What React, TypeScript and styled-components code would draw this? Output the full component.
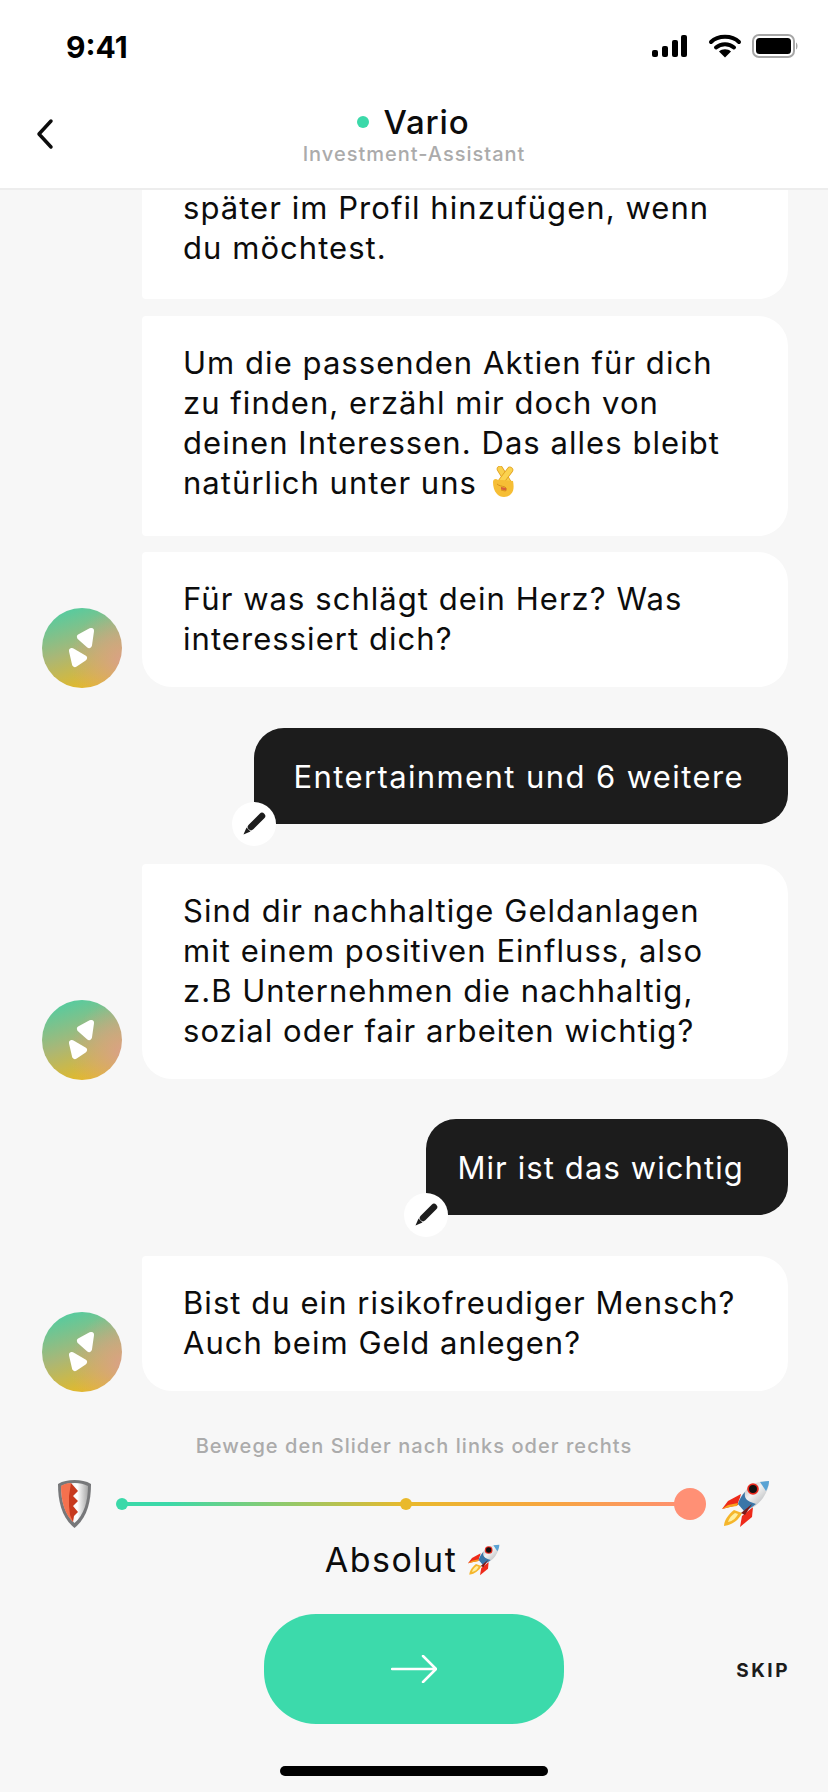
import React from 'react';
import styled, { createGlobalStyle } from 'styled-components';

const GlobalStyle = createGlobalStyle`
  html, body {
    margin: 0;
    padding: 0;
    background: #f7f7f7;
  }

  * {
    box-sizing: border-box;
  }
`;

const RocketIcon: React.FC<{ size: number }> = ({ size }) => (
  <svg width={size} height={size} viewBox="0 0 48 48">
    <defs>
      <linearGradient id="hull" x1="0" y1="0" x2="1" y2="1">
        <stop offset="0" stopColor="#8f9396" />
        <stop offset="0.45" stopColor="#f2f2f2" />
        <stop offset="1" stopColor="#9a9ea2" />
      </linearGradient>
    </defs>
    <path d="M0 29 L6 21 L19 14 L16 25 L8 27 Z" fill="#ee2a1a" />
    <path d="M0 29 L6 25 L16 23 L15 26 L8 27 Z" fill="#f7a21e" />
    <path d="M18 47 L20 36 L31 27 L30 37 Z" fill="#ee2a1a" />
    <path d="M2 46 C2 40 7 34 12 30 L20 33 C17 40 10 45 2 46 Z" fill="#f5b62c" />
    <path d="M6 42 C7 38 10 35 13 33 L16 34 C14 38 11 41 6 42 Z" fill="#fff0a0" />
    <path d="M47 1 C40 1 30 3 25 9 C20 15 16 20 16 24 L22 31 C28 30 36 25 41 18 C45 12 47 6 47 1 Z" fill="url(#hull)" />
    <path d="M16 24 C17 20 20 15 23 12 C22 18 24 21 34 24 C30 27 26 30 22 31 Z" fill="#3a76a8" />
    <path d="M38 2 C41 1.500 44 1 47 1 C47 4 46 8 44 11 C42 8 40 5 38 2 Z" fill="#5aa3d4" />
    <path d="M19 33 L30 24 L23 35 Z" fill="#7c1a18" />
    <circle cx="31" cy="9" r="5.800" fill="#e8281c" />
    <circle cx="31" cy="9" r="4" fill="#111" />
  </svg>
);

const ShieldIcon: React.FC = () => (
  <svg width="33" height="48" viewBox="0 0 33 48">
    <defs>
      <linearGradient id="plate" x1="0" y1="0" x2="1" y2="0">
        <stop offset="0" stopColor="#d8d8d8" />
        <stop offset="0.6" stopColor="#ffffff" />
        <stop offset="1" stopColor="#a8a8a8" />
      </linearGradient>
    </defs>
    <path d="M16.500 0 C23 0 28 1 33 4 C33 22 29 38 16.500 48 C4 38 0 22 0 4 C5 1 10 0 16.500 0 Z" fill="#77787a" />
    <path d="M16.500 3 C22 3 26 4 30 6 C30 21 26 35 16.500 43 C7 35 3 21 3 6 C7 4 11 3 16.500 3 Z" fill="url(#plate)" />
    <path d="M13 3 C9 3 6 4 3 6 C3 21 7 35 15 42 L14 36 L18 32 L13 26 L18 21 L13 16 L18 11 L13 5 Z" fill="#f4714e" />
    <path d="M13 3 L20 11 L15 16 L20 21 L15 26 L20 32 L16 36 L15 42 L12 35 L11 26 L11 16 Z" fill="#c73a1e" />
  </svg>
);

const FingersSvg = styled.svg`
  margin-left: 5px;
  vertical-align: -4px;
`;

const FingersIcon: React.FC = () => (
  <FingersSvg width="22" height="32" viewBox="0 0 22 32">
    <path d="M8 3 L16 16" stroke="#e0a020" strokeWidth="6.500" strokeLinecap="round" />
    <path d="M8 3 L16 16" stroke="#f9cf4b" strokeWidth="5" strokeLinecap="round" />
    <path d="M18 4 L8 17" stroke="#e0a020" strokeWidth="6.500" strokeLinecap="round" />
    <path d="M18 4 L8 17" stroke="#fbd34f" strokeWidth="5" strokeLinecap="round" />
    <path d="M1 16 C1 13 4 12 6 14 L10 14 L21 15 C22 20 22 25 19 28 C16 32 8 32 5 28 C2 25 1 20 1 16 Z" fill="#f6be35" />
    <path d="M5 18 C7 20 10 20 13 21 C15 22 15 25 13 25 L9 24" fill="none" stroke="#d8921c" strokeWidth="1" />
    <path d="M9 21 L14 22 L14 24.500 L9 23.500 Z" fill="#d8603a" />
  </FingersSvg>
);

const StatusIcons: React.FC = () => (
  <svg width="146" height="24" viewBox="0 0 146 24">
    <rect x="0" y="16" width="6" height="7" rx="2" fill="#000" />
    <rect x="10" y="12" width="6" height="11" rx="2" fill="#000" />
    <rect x="20" y="6" width="6" height="17" rx="2" fill="#000" />
    <rect x="29" y="1" width="6" height="22" rx="2" fill="#000" />
    <path d="M59 8 C66 1 80 1 87 8" stroke="#000" strokeWidth="4" fill="none" strokeLinecap="round" />
    <path d="M64 13.500 C69 9 77 9 82 13.500" stroke="#000" strokeWidth="4" fill="none" strokeLinecap="round" />
    <path d="M67 17.500 L73 23.500 L79 17.500 C76 14.500 70 14.500 67 17.500 Z" fill="#000" />
    <rect x="101" y="1" width="41" height="22" rx="6" fill="none" stroke="#a6a6a6" strokeWidth="2" />
    <rect x="104" y="4" width="35" height="16" rx="3.500" fill="#000" />
    <path d="M144 8.500 C146 9.500 146 14.500 144 15.500 Z" fill="#a6a6a6" />
  </svg>
);

const Screen = styled.div`
  width: 828px;
  height: 1792px;
  display: flex;
  flex-direction: column;
  overflow: hidden;
  background: #f7f7f7;
  color: #0c0c0c;
  font-family: 'Inter', 'Liberation Sans', sans-serif;
`;

const Header = styled.header`
  position: relative;
  z-index: 1;
  flex: none;
  height: 190px;
  background: #fff;
  border-bottom: 2px solid #ededed;
`;

const StatusBar = styled.div`
  height: 88px;
  padding: 31px 30px 0 66px;
  display: flex;
  justify-content: space-between;
  align-items: flex-start;
  font-size: 30px;
  line-height: 32px;
  font-weight: 700;
  color: #000;

  svg {
    margin-top: 3px;
  }
`;

const NavBar = styled.div`
  position: relative;
  display: flex;
  flex-direction: column;
  align-items: center;
`;

const BackButton = styled.div`
  position: absolute;
  left: 33px;
  top: 30px;
  line-height: 0;
`;

const TitleRow = styled.div`
  display: flex;
  align-items: center;
  gap: 15px;
  height: 38px;
  margin: 15px 0 0 -2px;
  font-size: 33px;
  font-weight: 500;
  letter-spacing: 0.8px;
`;

const OnlineDot = styled.span`
  width: 12px;
  height: 12px;
  border-radius: 50%;
  background: #3bd9a9;
`;

const Subtitle = styled.div`
  margin-top: 1px;
  font-size: 20px;
  line-height: 24px;
  font-weight: 500;
  letter-spacing: 1px;
  color: #ababab;
`;

const Chat = styled.main`
  flex: none;
  height: 1202px;
  padding: 0 40px 0 42px;
  display: flex;
  flex-direction: column;
  overflow: hidden;
`;

const BotRow = styled.div<{ $gap: number; $indent?: boolean }>`
  display: flex;
  align-items: flex-end;
  gap: 20px;
  margin-top: ${(p) => p.$gap}px;
  padding-left: ${(p) => (p.$indent ? 100 : 0)}px;
`;

const Avatar = styled.div`
  flex: none;
  width: 80px;
  height: 80px;
  margin-bottom: -1px;
  border-radius: 50%;
  background:
    radial-gradient(circle at 100% 65%, #d9a187 0%, rgba(217, 161, 135, 0) 55%),
    linear-gradient(162deg, #5cca9c 12%, #a9b777 50%, #e3b92a 88%);
  line-height: 0;
`;

const Bubble = styled.div`
  flex: 1;
  padding: 27px 30px 28px 41px;
  background: #fff;
  border-radius: 4px 30px 30px 30px;
  font-size: 31px;
  line-height: 40px;
  letter-spacing: 1.05px;
  white-space: nowrap;
`;

const MiddleBubble = styled(Bubble)`
  padding-bottom: 33px;
  border-bottom-left-radius: 4px;
`;

const ClippedBubble = styled(Bubble)`
  margin-top: -2px;
  padding-top: 0;
  padding-bottom: 31px;
  border-radius: 0 0 30px 4px;
`;

const UserRow = styled.div<{ $gap: number }>`
  display: flex;
  justify-content: flex-end;
  margin-top: ${(p) => p.$gap}px;
`;

const UserBubble = styled.div<{ $padLeft: number; $tracking: number }>`
  position: relative;
  height: 96px;
  padding-left: ${(p) => p.$padLeft}px;
  padding-right: 44px;
  display: flex;
  align-items: center;
  background: #1c1c1c;
  border-radius: 30px 30px 30px 4px;
  color: #fff;
  font-size: 31px;
  letter-spacing: ${(p) => p.$tracking}px;
  white-space: nowrap;
`;

const EditBadge = styled.div`
  position: absolute;
  left: -22px;
  bottom: -22px;
  width: 44px;
  height: 44px;
  display: flex;
  align-items: center;
  justify-content: center;
  border-radius: 50%;
  background: #fff;
`;

const Footer = styled.section`
  flex: 1;
  position: relative;
  display: flex;
  flex-direction: column;
  align-items: center;
`;

const Hint = styled.div`
  margin-top: 41px;
  font-size: 20px;
  line-height: 26px;
  font-weight: 500;
  letter-spacing: 1.05px;
  color: #ababab;
`;

const SliderRow = styled.div`
  margin-top: 21px;
  width: 100%;
  height: 48px;
  padding: 0 58px;
  display: flex;
  align-items: center;
  justify-content: space-between;
`;

const Track = styled.div`
  position: relative;
  width: 568px;
  height: 4px;
  margin-left: 25px;
  background: linear-gradient(90deg, #3bd9a9 0%, #3bd9a9 8%, #e9b92c 50%, #f7a63f 75%, #ff8f73 100%);
`;

const TrackDot = styled.span<{ $left: number; $color: string }>`
  position: absolute;
  top: -4px;
  left: ${(p) => p.$left}px;
  width: 12px;
  height: 12px;
  margin-left: -6px;
  border-radius: 50%;
  background: ${(p) => p.$color};
`;

const Thumb = styled.span`
  position: absolute;
  top: -14px;
  right: -16px;
  width: 32px;
  height: 32px;
  border-radius: 50%;
  background: #ff9075;
`;

const RocketSlot = styled.div`
  margin-left: 26px;
  line-height: 0;
`;

const Verdict = styled.div`
  margin: 10px 0 0 -3px;
  display: flex;
  align-items: center;
  gap: 11px;
  font-size: 34px;
  line-height: 44px;
  letter-spacing: 1.5px;
  color: #0c0c0c;
`;

const NextButton = styled.button`
  margin-top: 32px;
  width: 300px;
  height: 110px;
  border: 0;
  border-radius: 52px;
  background: #3cdaab;
  display: flex;
  align-items: center;
  justify-content: center;
`;

const Skip = styled.div`
  position: absolute;
  right: 38px;
  top: 267px;
  font-size: 19px;
  line-height: 24px;
  font-weight: 700;
  letter-spacing: 2.500px;
  color: #1c1c1c;
`;

const HomeIndicator = styled.div`
  margin-top: 42px;
  width: 268px;
  height: 10px;
  border-radius: 5px;
  background: #000;
`;

const VarioAvatar: React.FC = () => (
  <Avatar>
    <svg width="80" height="80" viewBox="0 0 80 80">
      <g fill="#fff" stroke="#fff" strokeWidth="6" strokeLinejoin="round">
        <path d="M49 23 L38 29 L47 37 Z" />
        <path d="M30 43 L42 50 L33 56 Z" />
      </g>
    </svg>
  </Avatar>
);

const Pencil: React.FC = () => (
  <EditBadge>
    <svg width="24" height="24" viewBox="0 0 24 24">
      <path d="M9 15 L20 4" stroke="#1c1c1c" strokeWidth="6.500" strokeLinecap="round" />
      <path d="M4.500 15.500 L8.500 19.500 L1.500 22.500 Z" fill="#1c1c1c" />
    </svg>
  </EditBadge>
);

const App: React.FC = () => (
  <Screen>
    <GlobalStyle />
    <Header>
      <StatusBar>
        <span>9:41</span>
        <StatusIcons />
      </StatusBar>
      <NavBar>
        <BackButton>
          <svg width="24" height="32" viewBox="0 0 24 32">
            <path d="M18 3 L6 16 L18 29" fill="none" stroke="#0c0c0c" strokeWidth="3.500" strokeLinecap="round" strokeLinejoin="round" />
          </svg>
        </BackButton>
        <TitleRow>
          <OnlineDot />
          Vario
        </TitleRow>
        <Subtitle>Investment-Assistant</Subtitle>
      </NavBar>
    </Header>
    <Chat>
      <BotRow $gap={0} $indent>
        <ClippedBubble>
          später im Profil hinzufügen, wenn
          <br />
          du möchtest.
        </ClippedBubble>
      </BotRow>
      <BotRow $gap={17} $indent>
        <MiddleBubble>
          Um die passenden Aktien für dich
          <br />
          zu finden, erzähl mir doch von
          <br />
          deinen Interessen. Das alles bleibt
          <br />
          natürlich unter uns <FingersIcon />
        </MiddleBubble>
      </BotRow>
      <BotRow $gap={16}>
        <VarioAvatar />
        <Bubble>
          Für was schlägt dein Herz? Was
          <br />
          interessiert dich?
        </Bubble>
      </BotRow>
      <UserRow $gap={41}>
        <UserBubble $padLeft={39} $tracking={1.4}>
          Entertainment und 6 weitere
          <Pencil />
        </UserBubble>
      </UserRow>
      <BotRow $gap={40}>
        <VarioAvatar />
        <Bubble>
          Sind dir nachhaltige Geldanlagen
          <br />
          mit einem positiven Einfluss, also
          <br />
          z.B Unternehmen die nachhaltig,
          <br />
          sozial oder fair arbeiten wichtig?
        </Bubble>
      </BotRow>
      <UserRow $gap={40}>
        <UserBubble $padLeft={31} $tracking={1.1}>
          Mir ist das wichtig
          <Pencil />
        </UserBubble>
      </UserRow>
      <BotRow $gap={41}>
        <VarioAvatar />
        <Bubble>
          Bist du ein risikofreudiger Mensch?
          <br />
          Auch beim Geld anlegen?
        </Bubble>
      </BotRow>
    </Chat>
    <Footer>
      <Hint>Bewege den Slider nach links oder rechts</Hint>
      <SliderRow>
        <ShieldIcon />
        <Track>
          <TrackDot $left={0} $color="#3bd9a9" />
          <TrackDot $left={284} $color="#e9b92c" />
          <Thumb />
        </Track>
        <RocketSlot>
          <RocketIcon size={48} />
        </RocketSlot>
      </SliderRow>
      <Verdict>
        Absolut <RocketIcon size={32} />
      </Verdict>
      <NextButton aria-label="Weiter">
        <svg width="46" height="28" viewBox="0 0 46 28">
          <path d="M1 14 H44 M32 1 L45 14 L32 27" fill="none" stroke="#fff" strokeWidth="2.500" strokeLinecap="round" strokeLinejoin="round" />
        </svg>
      </NextButton>
      <Skip>SKIP</Skip>
      <HomeIndicator />
    </Footer>
  </Screen>
);

export default App;
